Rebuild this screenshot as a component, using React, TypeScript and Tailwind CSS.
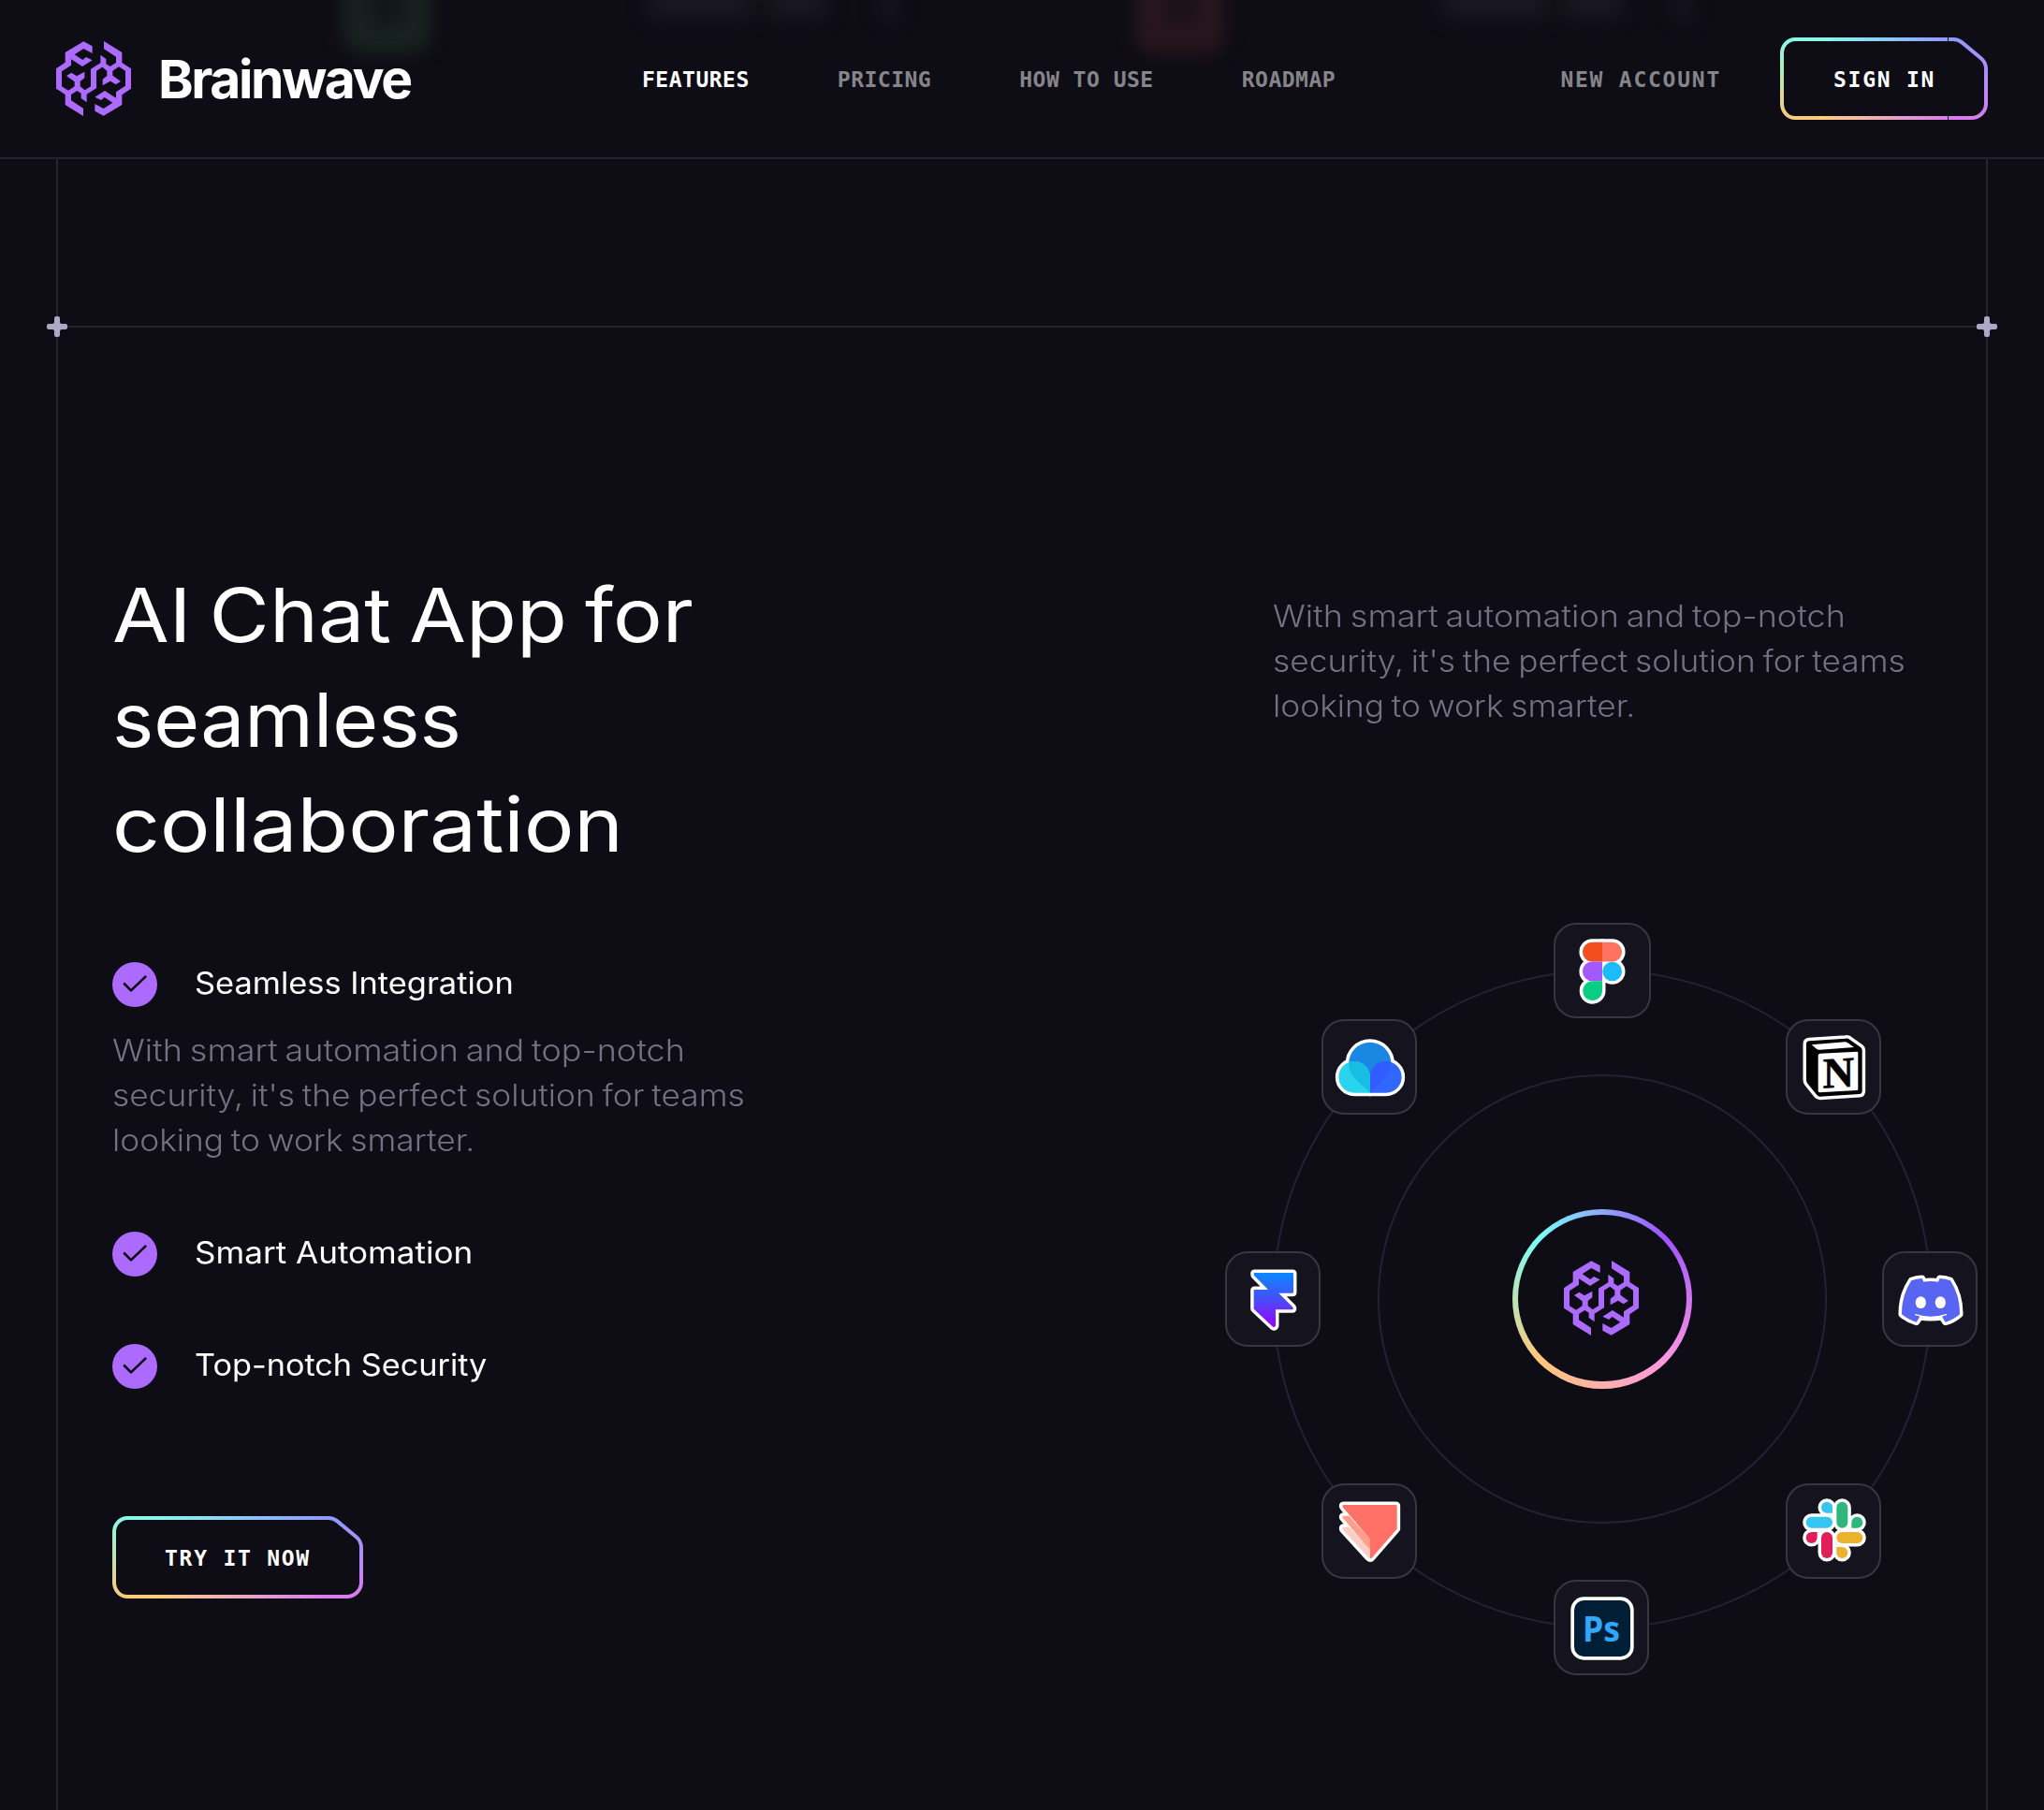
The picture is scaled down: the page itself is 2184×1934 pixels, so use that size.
import React from "react";

type Point = [number, number];

/* One half of the brain outline; the other half is the same shape turned by 180 degrees. */
const brainHalf: Point[] = [
  [116, 16], [88, 1], [29, 36], [29, 68], [0, 88], [0, 152], [29, 171], [29, 204], [87, 240], [87, 215],
  [48, 190], [48, 171], [67, 159], [80, 167], [80, 183], [98, 196], [98, 170], [129, 151], [129, 95],
  [148, 83], [163, 95], [163, 111], [149, 122], [149, 142], [174, 128], [191, 139], [207, 129], [181, 110],
  [181, 95], [201, 82], [222, 95], [222, 143], [192, 163], [192, 182], [156, 159], [124, 179], [144, 189],
  [155, 180], [181, 197], [152, 216], [124, 201],
];
const brainPoints = [...brainHalf, ...brainHalf.map(([x, y]): Point => [240 - x, 240 - y])]
  .map((p) => p.join(","))
  .join(" ");

function BrainMark() {
  return (
    <svg className="block size-20 shrink-0" viewBox="0 0 240 240">
      <polygon points={brainPoints} fill="#AC6AFF" />
    </svg>
  );
}

function GradientButton({ label, seam = false }: { label: string; seam?: boolean }) {
  return (
    <button
      className={`relative flex h-[88px] items-center font-['DejaVu_Sans_Mono'] text-[23px] leading-none font-bold tracking-[1.75px] text-white ${seam ? "w-[222px] pl-[57px]" : "w-[268px] pl-14"}`}
    >
      <span className="pt-0.5">{label}</span>
      <span className="absolute inset-0 flex">
        <svg className="h-[88px] w-[42px] shrink-0" viewBox="0 0 21 44" fill="none">
          <defs>
            <linearGradient id="btn-left" x1="50%" x2="50%" y1="0%" y2="100%">
              <stop offset="0%" stopColor="#89F9E8" />
              <stop offset="100%" stopColor="#FACB7B" />
            </linearGradient>
          </defs>
          <path
            stroke="url(#btn-left)"
            strokeWidth="2"
            d="M21 43L8.11 43C4.18 43 1 39.58 1 35.36L1 8.64C1 4.42 4.18 1 8.11 1L21 1"
          />
        </svg>
        <span className={`flex flex-1 flex-col justify-between ${seam ? "mr-px" : ""}`}>
          <span className="h-1 bg-linear-to-r from-[#87FCE6] to-[#9099FC]" />
          <span className="h-1 bg-linear-to-r from-[#FFCF78] to-[#D87CEE]" />
        </span>
        <svg className="h-[88px] w-[42px] shrink-0" viewBox="0 0 21 44" fill="none">
          <defs>
            <linearGradient id="btn-right" x1="14%" x2="14%" y1="0%" y2="100%">
              <stop offset="0%" stopColor="#9099FC" />
              <stop offset="100%" stopColor="#D87CEE" />
            </linearGradient>
          </defs>
          <path
            stroke="url(#btn-right)"
            strokeWidth="2"
            d="M0 43L5.03 43L12.24 43C16.53 43 20 39.58 20 35.36L20 16.86C20 14.59 18.98 12.44 17.21 10.98L7.19 2.67C5.89 1.59 4.25 1 2.5 1L0 1"
          />
        </svg>
      </span>
    </button>
  );
}

function PlusMark() {
  return (
    <svg className="block size-[22px]" viewBox="0 0 11 11">
      <path
        d="M7 1a1 1 0 0 0-1-1H5a1 1 0 0 0-1 1v2a1 1 0 0 1-1 1H1a1 1 0 0 0-1 1v1a1 1 0 0 0 1 1h2a1 1 0 0 1 1 1v2a1 1 0 0 0 1 1h1a1 1 0 0 0 1-1V8a1 1 0 0 1 1-1h2a1 1 0 0 0 1-1V5a1 1 0 0 0-1-1H8a1 1 0 0 1-1-1V1z"
        fill="#ADA8C4"
      />
    </svg>
  );
}

function CheckMark() {
  return (
    <svg className="block size-12 shrink-0" viewBox="0 0 48 48">
      <circle cx="24" cy="24" r="24" fill="#AC6AFF" />
      <path d="M13 23.2L20 30.4L35.4 15.6" fill="none" stroke="#0E0C15" strokeWidth="2.7" strokeLinecap="round" strokeLinejoin="round" />
    </svg>
  );
}

/* Draws the shapes twice: a white sticker outline first, then the coloured shapes. */
function Sticker({ shapes }: { shapes: { d: string; fill: string }[] }) {
  return (
    <>
      {shapes.map((s, i) => (
        <path key={`o${i}`} d={s.d} fill="white" stroke="white" strokeWidth="21" strokeLinejoin="round" />
      ))}
      {shapes.map((s, i) => (
        <path key={`f${i}`} d={s.d} fill={s.fill} />
      ))}
    </>
  );
}

const Figma = () => (
  <Sticker
    shapes={[
      { d: "M156 62H124a31.2 31.2 0 0 0 0 62.500h32z", fill: "#F24E1E" },
      { d: "M156 62h32a31.2 31.2 0 0 1 0 62.500h-32z", fill: "#FF7262" },
      { d: "M156 124.500H124a31.200 31.200 0 0 0 0 62.500h32z", fill: "#A259FF" },
      { d: "M157 156a31 31 0 1 1 62 0a31 31 0 1 1-62 0z", fill: "#1ABCFE" },
      { d: "M156 187H124a31.200 31.200 0 1 0 32 31.200z", fill: "#0ACF83" },
    ]}
  />
);

const cloudTop = "M156 236L108 191A68 68 0 1 1 203 191Z";
const cloudLeft = "M156 236H105a50.500 50.500 0 1 1 51-50.500z";
const cloudRight = "M156 236h51a50.500 50.500 0 1 0-51-50.500z";
const Cloud = () => (
  <>
    <defs>
      <clipPath id="cloud-top">
        <path d={cloudTop} />
      </clipPath>
    </defs>
    <Sticker
      shapes={[
        { d: cloudTop, fill: "#1C87E2" },
        { d: cloudLeft, fill: "#2AD4EE" },
        { d: cloudRight, fill: "#3067FF" },
      ]}
    />
    <g clipPath="url(#cloud-top)">
      <path d={cloudLeft} fill="#18BDE3" />
      <path d={cloudRight} fill="#315CFF" />
    </g>
  </>
);

const Notion = () => (
  <>
    <Sticker
      shapes={[
        {
          d: "M75 70L192 62Q200 61 206 66L240 90Q245 94 245 100V230Q245 239 236 240L110 248Q104 248 100 243L70 206Q66 201 66 195V80Q66 71 75 70Z",
          fill: "#000",
        },
      ]}
    />
    <path d="M83 82L190 73Q195 73 199 76L219 90L110 98Q104 99 99 95Z" fill="white" />
    <path d="M110 110L228 104Q232 104 232 108V224Q232 228 228 228L109 235Q104 235 104 230V116Q104 111 110 110Z" fill="white" />
    <text
      x="169"
      y="218"
      textAnchor="middle"
      fontSize="138"
      fontWeight="700"
      fontFamily="'Liberation Serif', serif"
      stroke="#000"
      strokeWidth="2"
      transform="translate(169 170) skewY(-3) translate(-169 -170)"
    >
      N
    </text>
  </>
);

const Discord = () => (
  <>
    <Sticker
      shapes={[
        {
          d: "M94 94Q110 88 128 87L133 98Q156 94 180 98L185 87Q204 88 219 94Q250 142 249 202Q227 221 203 227L192 210Q156 216 121 210L110 227Q86 221 63 202Q62 142 94 94Z",
          fill: "#5865F2",
        },
      ]}
    />
    <path d="M107 203Q156 219 206 203" fill="none" stroke="white" strokeWidth="4" strokeLinecap="round" />
    <path d="M118 206Q156 215 195 206L190 220H123Z" fill="white" />
    <ellipse cx="124" cy="164" rx="17" ry="19" fill="white" />
    <ellipse cx="187" cy="164" rx="17" ry="19" fill="white" />
  </>
);

const Slack = () => (
  <Sticker
    shapes={[
      { d: "M83 107h49a18 18 0 0 1 0 36h-49a18 18 0 0 1 0-36z", fill: "#36C5F0" },
      { d: "M150 95h-18a18 18 0 1 1 18-18z", fill: "#36C5F0" },
      { d: "M163 77a18 18 0 0 1 36 0v48a18 18 0 0 1-36 0z", fill: "#2EB67D" },
      { d: "M211 143v-18a18 18 0 1 1 18 18z", fill: "#2EB67D" },
      { d: "M181 156h48a18 18 0 0 1 0 36h-48a18 18 0 0 1 0-36z", fill: "#ECB22E" },
      { d: "M163 204h18a18 18 0 1 1-18 18z", fill: "#ECB22E" },
      { d: "M114 174a18 18 0 0 1 36 0v48a18 18 0 0 1-36 0z", fill: "#E01E5A" },
      { d: "M101 156v18a18 18 0 1 1-18-18z", fill: "#E01E5A" },
    ]}
  />
);

const Photoshop = () => (
  <>
    <rect x="55" y="55" width="202" height="202" rx="42" fill="white" />
    <rect x="66" y="66" width="180" height="180" rx="31" fill="#001E36" />
    <text x="93" y="198" fontSize="113" fontWeight="700" fontFamily="'Open Sans', sans-serif" fill="#31A8FF" textLength="120" lengthAdjust="spacingAndGlyphs">
      Ps
    </text>
  </>
);

const ProtoPie = () => (
  <Sticker
    shapes={[
      { d: "M67 144Q67 140 72 140H90L156 210V241Q153 241 150 238L68 148Q67 146 67 144Z", fill: "#FBCFC9" },
      { d: "M67 108Q67 104 72 104H88L156 179V214L69 112Q67 110 67 108Z", fill: "#FF9E8A" },
      { d: "M67 73Q67 69 72 69H238Q242 69 242 73V146L161 239Q159 241 156 241V179L69 77Q67 75 67 73Z", fill: "#FF7067" },
    ]}
  />
);

const Framer = () => (
  <>
    <defs>
      <linearGradient id="framer-fill" x1="0" x2="0" y1="0" y2="1">
        <stop offset="0%" stopColor="#0A88FF" />
        <stop offset="50%" stopColor="#4A4CFA" />
        <stop offset="100%" stopColor="#9A00FF" />
      </linearGradient>
    </defs>
    <Sticker
      shapes={[
        {
          d: "M92 72Q92 69 95 69H216Q219 69 219 72V131Q219 134 216 134H172L217 179Q221 187 214 187H162V238Q160 246 153 242L93 186Q92 185 92 183V126Q92 123 95 123H138L94 79Q92 77 92 72Z",
          fill: "url(#framer-fill)",
        },
      ]}
    />
  </>
);

const orbitApps = [
  { name: "Figma", place: "left-[300px] top-[-50px] w-[104px]", Icon: Figma },
  { name: "Notion", place: "left-[548px] top-[53px] w-[102px]", Icon: Notion },
  { name: "Discord", place: "left-[651px] top-[301px] w-[102px]", Icon: Discord },
  { name: "Slack", place: "left-[548px] top-[549px] w-[102px]", Icon: Slack },
  { name: "Photoshop", place: "left-[300px] top-[652px] w-[102px]", Icon: Photoshop },
  { name: "ProtoPie", place: "left-[52px] top-[549px] w-[102px]", Icon: ProtoPie },
  { name: "Framer", place: "left-[-51px] top-[301px] w-[102px]", Icon: Framer },
  { name: "Raindrop", place: "left-[52px] top-[53px] w-[102px]", Icon: Cloud },
];

function Orbit() {
  return (
    <div className="relative flex size-[704px] items-center justify-center rounded-full border-2 border-[#252134]">
      <div className="flex size-[480px] items-center justify-center rounded-full border-2 border-[#252134]">
        <div className="size-48 rounded-full bg-[conic-gradient(from_225deg,#FFC876,#79FFF7,#9F53FF,#FF98E2,#FFC876)] px-[6px] pt-[6px] pb-2">
          <div className="flex size-full items-center justify-center rounded-full bg-[#0E0C15] pr-0.5">
            <BrainMark />
          </div>
        </div>
      </div>
      <div className="absolute -inset-0.5">
        {orbitApps.map(({ name, place, Icon }) => (
          <div
            key={name}
            className={`absolute flex h-[102px] items-center rounded-3xl border-2 border-[#38363F] bg-[#15131D] ${place}`}
          >
            <svg className="-ml-0.5 size-[102px] shrink-0" viewBox="0 0 306 306" aria-label={name}>
              <Icon />
            </svg>
          </div>
        ))}
      </div>
    </div>
  );
}

const navItems = ["FEATURES", "PRICING", "HOW TO USE", "ROADMAP"];

function Header() {
  return (
    <header className="relative flex h-[170px] items-center overflow-hidden border-b-2 border-[#252134] px-[60px]">
      <div className="absolute -top-10 left-[365px] h-[97px] w-[96px] rounded-[20px] border-[30px] border-[#18221F] bg-[#121619] blur-[9px]" />
      <div className="absolute -top-10 left-[1213px] h-[98px] w-[96px] rounded-[20px] border-[30px] border-[#28161D] bg-[#1B1119] blur-[9px]" />
      <div className="absolute -top-4 left-[692px] flex gap-4 blur-[9px]">
        <span className="h-9 w-[112px] bg-[#191720]" />
        <span className="h-9 w-[64px] bg-[#191720]" />
        <span className="ml-10 h-10 w-5 bg-[#16141D]" />
      </div>
      <div className="absolute -top-4 left-[1541px] flex gap-4 blur-[9px]">
        <span className="h-9 w-[112px] bg-[#191720]" />
        <span className="h-9 w-[64px] bg-[#191720]" />
        <span className="ml-10 h-10 w-5 bg-[#16141D]" />
      </div>

      <a className="relative flex w-[384px] items-center gap-[29px]">
        <BrainMark />
        <span className="pt-px font-['Inter'] text-[57px] leading-none font-bold tracking-[-0.043em] text-white">Brainwave</span>
      </a>
      <nav className="relative ml-[195px] flex pt-0.5 font-['DejaVu_Sans_Mono'] text-[23px] leading-none font-bold tracking-[0.5px]">
        {navItems.map((item, i) => (
          <a key={item} className={i === 0 ? "px-[47px] text-white" : "px-[47px] text-white/50"}>
            {item}
          </a>
        ))}
      </nav>
      <div className="relative ml-auto flex items-center gap-[63px]">
        <a className="pt-0.5 font-['DejaVu_Sans_Mono'] text-[23px] leading-none font-bold tracking-[1.75px] text-white/50">NEW ACCOUNT</a>
        <GradientButton label="SIGN IN" seam />
      </div>
    </header>
  );
}

function Blurb() {
  return (
    <p className="relative top-px flex flex-col items-start font-['Inter'] text-[32px] leading-[48px] font-light [word-spacing:-2px] whitespace-nowrap text-[#757185]">
      <span className="origin-left scale-x-[1.123]">With smart automation and top-notch</span>
      <span className="origin-left scale-x-[1.104]">security, it's the perfect solution for teams</span>
      <span className="origin-left scale-x-[1.104]">looking to work smarter.</span>
    </p>
  );
}

function Feature({ title, stretch }: { title: string; stretch: string }) {
  return (
    <div className="flex items-center gap-10">
      <CheckMark />
      <h3 className={`origin-left pb-0.5 font-['Inter'] text-[32px] leading-[46px] text-white ${stretch}`}>{title}</h3>
    </div>
  );
}

export default function App() {
  return (
    <div className="flex h-[1934px] w-[2184px] flex-col overflow-hidden bg-[#0E0C15]">
      <Header />
      <main className="mx-[60px] flex flex-1 flex-col border-x-2 border-[#26242C]">
        <div className="relative h-[180px] shrink-0 border-b-2 border-[#26242C]">
          <div className="absolute -bottom-3 -left-3">
            <PlusMark />
          </div>
          <div className="absolute -right-3 -bottom-3">
            <PlusMark />
          </div>
        </div>
        <section className="flex justify-between pr-[58px] pl-[58px]">
          <div className="flex flex-col items-start pt-[251px]">
            <h2 className="flex flex-col items-start font-['Inter'] text-[80px] leading-[112px] font-normal [word-spacing:-5px] whitespace-nowrap text-white">
              <span className="origin-left scale-x-[1.1]">AI Chat App for</span>
              <span className="origin-left scale-x-[1.05]">seamless</span>
              <span className="origin-left scale-x-[1.114]">collaboration</span>
            </h2>
            <ul className="mt-[91px]">
              <li>
                <Feature title="Seamless Integration" stretch="scale-x-[1.075]" />
                <div className="mt-[22px]">
                  <Blurb />
                </div>
              </li>
              <li className="mt-[74px]">
                <Feature title="Smart Automation" stretch="scale-x-[1.096]" />
              </li>
              <li className="mt-[72px]">
                <Feature title="Top-notch Security" stretch="scale-x-[1.07]" />
              </li>
            </ul>
            <div className="mt-[136px]">
              <GradientButton label="TRY IT NOW" />
            </div>
          </div>
          <div className="flex w-[704px] flex-col pt-[284px]">
            <Blurb />
            <div className="mt-[258px]">
              <Orbit />
            </div>
          </div>
        </section>
      </main>
    </div>
  );
}
